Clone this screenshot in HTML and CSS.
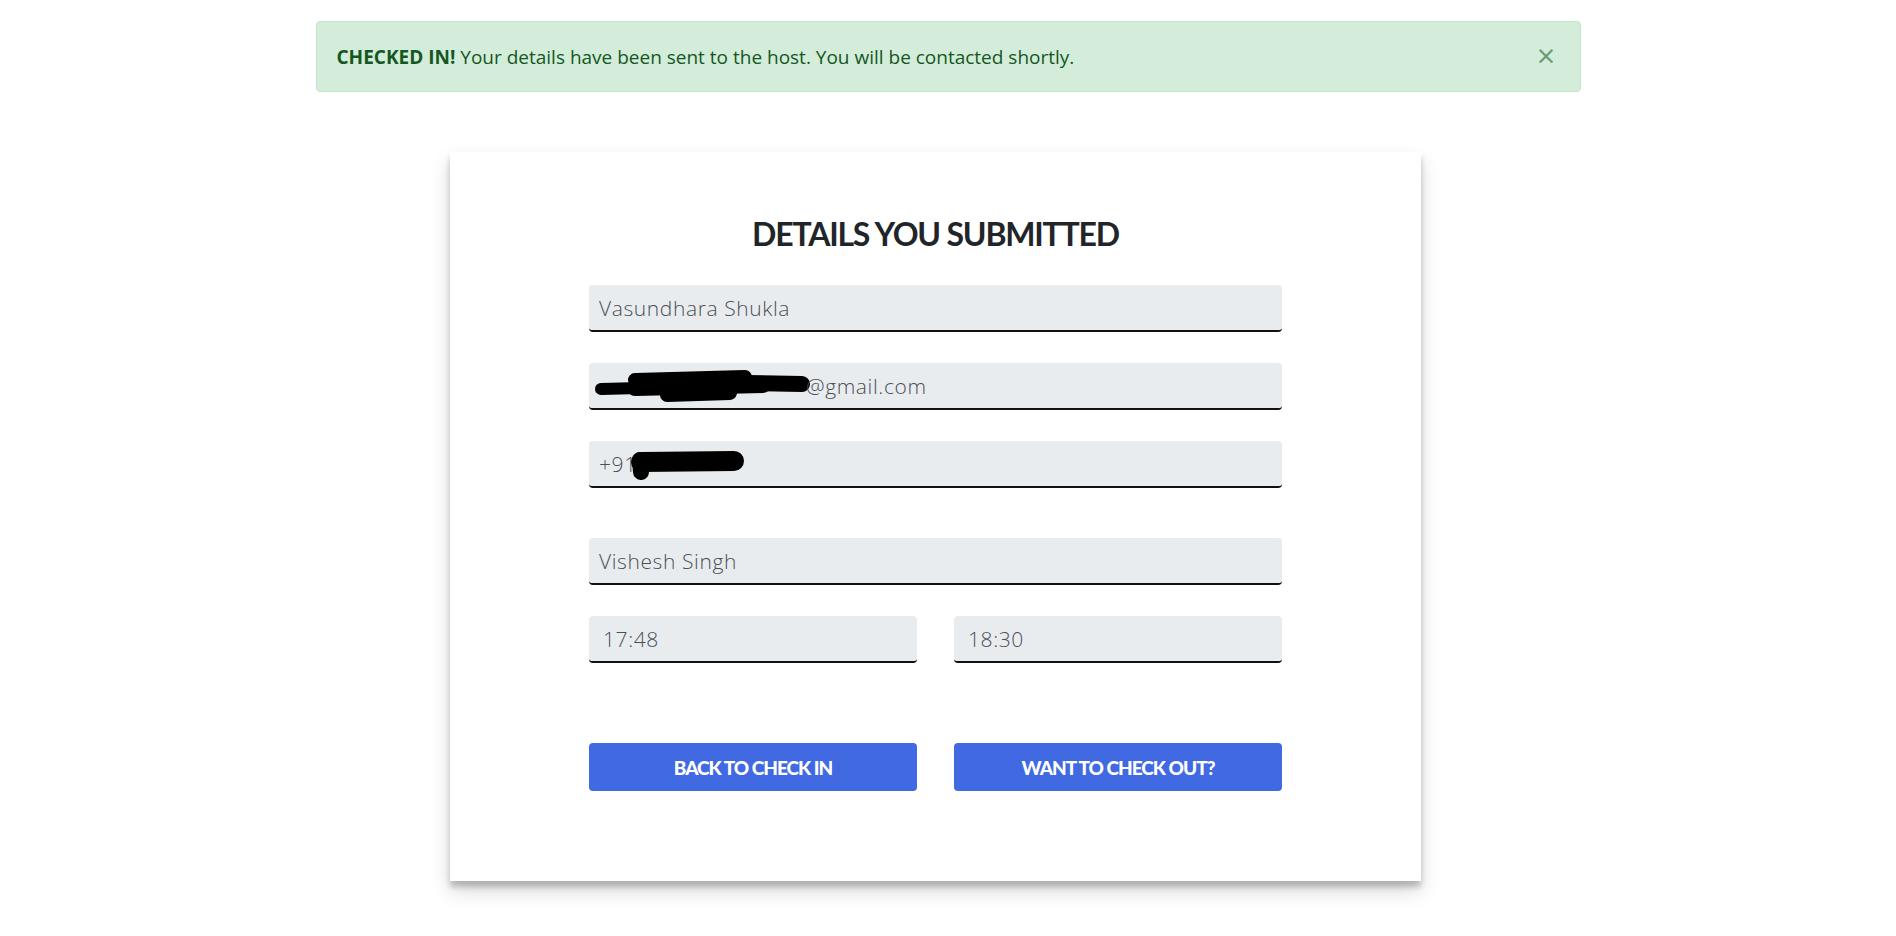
FILE: index.html
```html
<!DOCTYPE html>
<html lang="en">
<head>
<meta charset="utf-8">
<title>Details you submitted</title>
<link rel="stylesheet" href="styles.css">
</head>
<body>
  <div class="alert">
    <p class="alert-text"><strong>CHECKED IN!</strong> Your details have been sent to the host. You will be contacted shortly.</p>
    <span class="close">&times;</span>
  </div>

  <div class="card">
    <h2 class="title">DETAILS YOU SUBMITTED</h2>
    <div class="fields">
      <div class="field">Vasundhara Shukla</div>
      <div class="field"><svg class="scribble-email" width="215" height="34" viewBox="0 0 215 34"><g stroke="#000" stroke-linecap="round" fill="none"><path d="M6 20 L45 19" stroke-width="12"/><path d="M40 11 L150 8" stroke-width="14"/><path d="M40 19 L168 16" stroke-width="16"/><path d="M72 26 L135 24" stroke-width="14"/><path d="M150 14 L207 15" stroke-width="16"/></g></svg>@gmail.com</div>
      <div class="field"><span>+91</span><svg class="scribble-phone" width="114" height="30" viewBox="0 0 114 30"><g stroke="#000" stroke-linecap="round" fill="none"><path d="M11 12 L104 11" stroke-width="20"/><path d="M10 10 L11 22" stroke-width="16"/></g></svg></div>
      <div class="field host">Vishesh Singh</div>
      <div class="row">
        <div class="field time">17:48</div>
        <div class="field time">18:30</div>
      </div>
      <div class="row buttons">
        <button class="btn">BACK TO CHECK IN</button>
        <button class="btn">WANT TO CHECK OUT?</button>
      </div>
    </div>
  </div>
</body>
</html>
```

FILE: styles.css
```css
html, body {
  margin: 0;
  padding: 0;
  background: #ffffff;
}

body {
  font-family: "Open Sans", "Noto Sans", sans-serif;
  min-height: 936px;
}

.alert {
  position: relative;
  box-sizing: border-box;
  width: 1265px;
  height: 71px;
  margin: 21px auto 0;
  padding: 0 64px 0 20px;
  display: flex;
  align-items: center;
  background: #d4edda;
  border: 1px solid #c3e6cb;
  border-radius: 4px;
  color: #155724;
}

.alert-text {
  margin: 0;
  font-size: 19px;
  line-height: 28px;
}

.alert-text strong {
  font-weight: 700;
}

.close {
  position: absolute;
  right: 23px;
  top: 50%;
  transform: translateY(-58%);
  font-family: "DejaVu Sans", sans-serif;
  font-size: 25px;
  line-height: 1;
  color: #155724;
  opacity: 0.55;
}

.card {
  box-sizing: border-box;
  width: 971px;
  margin: 60px 0 56px 450px;
  padding: 63px 139px 90px;
  background: #ffffff;
  box-shadow: 0 10px 20px rgba(0, 0, 0, 0.14), 0 6px 6px rgba(0, 0, 0, 0.22);
}

.title {
  margin: 0 0 32px;
  font-family: "Lato", sans-serif;
  font-weight: 700;
  font-size: 32px;
  line-height: 38px;
  letter-spacing: -1.2px;
  text-align: center;
  color: #212529;
}

.fields {
  display: flex;
  flex-direction: column;
  gap: 31px;
}

.field {
  box-sizing: border-box;
  height: 47px;
  padding: 0 10px;
  display: flex;
  align-items: center;
  background: #e9ecef;
  border-bottom: 2px solid #111;
  border-radius: 4px;
  font-family: "Open Sans", sans-serif;
  font-weight: 300;
  font-size: 21px;
  letter-spacing: 0.6px;
  color: #495057;
}

.host {
  margin-top: 19px;
}

.scribble-email {
  margin-left: -4px;
  margin-right: -4px;
}

.scribble-phone {
  margin-left: -7px;
  margin-top: 3px;
}

.row {
  display: grid;
  grid-template-columns: 1fr 1fr;
  gap: 37px;
}

.time {
  padding-left: 14px;
}

.buttons {
  margin-top: 49px;
}

.btn {
  height: 48px;
  border: none;
  border-radius: 4px;
  background: #4169e1;
  color: #ffffff;
  font-family: "Lato", sans-serif;
  font-weight: 900;
  font-size: 19px;
  letter-spacing: -1px;
  cursor: pointer;
}
```
